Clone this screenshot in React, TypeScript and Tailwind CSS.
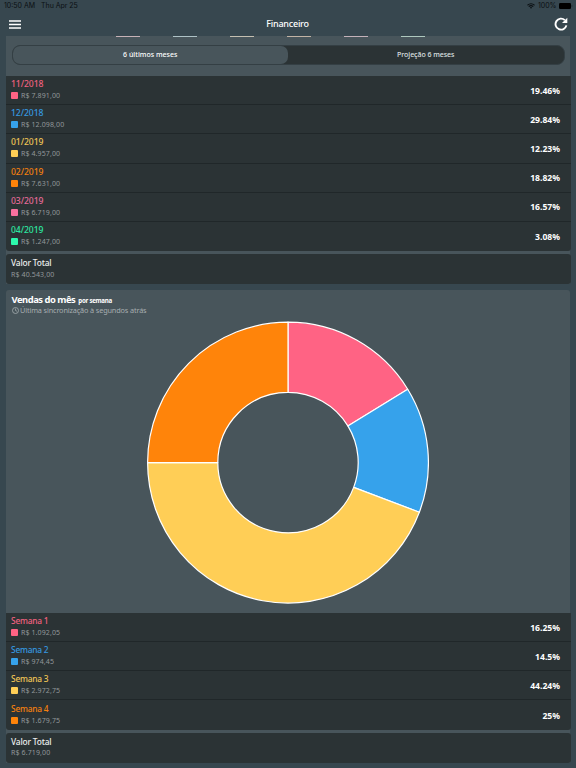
type Item = { label: string; value: string; percent: string; text: string; box: string };

const months: Item[] = [
  { label: '11/2018', value: 'R$ 7.891,00', percent: '19.46%', text: 'text-[#f0617f]', box: 'bg-[#ff6384]' },
  { label: '12/2018', value: 'R$ 12.098,00', percent: '29.84%', text: 'text-[#3699e0]', box: 'bg-[#36a2eb]' },
  { label: '01/2019', value: 'R$ 4.957,00', percent: '12.23%', text: 'text-[#f0c556]', box: 'bg-[#ffce56]' },
  { label: '02/2019', value: 'R$ 7.631,00', percent: '18.82%', text: 'text-[#f5800e]', box: 'bg-[#ff840a]' },
  { label: '03/2019', value: 'R$ 6.719,00', percent: '16.57%', text: 'text-[#e76a98]', box: 'bg-[#f9709f]' },
  { label: '04/2019', value: 'R$ 1.247,00', percent: '3.08%', text: 'text-[#2be8a2]', box: 'bg-[#2dfaad]' },
];

const weeks: Item[] = [
  { label: 'Semana 1', value: 'R$ 1.092,05', percent: '16.25%', text: 'text-[#f0617f]', box: 'bg-[#ff6384]' },
  { label: 'Semana 2', value: 'R$ 974,45', percent: '14.5%', text: 'text-[#3699e0]', box: 'bg-[#36a2eb]' },
  { label: 'Semana 3', value: 'R$ 2.972,75', percent: '44.24%', text: 'text-[#f0c556]', box: 'bg-[#ffce56]' },
  { label: 'Semana 4', value: 'R$ 1.679,75', percent: '25%', text: 'text-[#f5800e]', box: 'bg-[#ff840a]' },
];

function Rows({ items, labelClass }: { items: Item[]; labelClass: string }) {
  return (
    <div className="-mx-[0.5px] overflow-hidden rounded-b-[3px] bg-[#2b3335]">
      {items.map((item, i) => (
        <div
          key={item.label}
          className={`flex h-[29.2px] items-center justify-between pr-[10.5px] pl-[5.5px] ${i < items.length - 1 ? 'border-b border-[#202729]' : ''}`}
        >
          <div className="flex flex-col pb-[1.3px]">
            <span className={`${labelClass} ${item.text} h-[12px] leading-[12px] font-medium whitespace-nowrap`}>{item.label}</span>
            <span className="flex h-[11px] items-center gap-[3px]">
              <i className={`${item.box} size-[7px] rounded-[1px]`} />
              <span className="text-[7px] leading-[11px] tracking-[0.11px] text-[#92979a]">{item.value}</span>
            </span>
          </div>
          <span className="pt-px text-[8.6px] leading-[12px] font-bold text-white">{item.percent}</span>
        </div>
      ))}
    </div>
  );
}

function Total({ value }: { value: string }) {
  return (
    <div className="-mx-[0.5px] mt-[3px] flex h-[30px] flex-col rounded-[3px] bg-[#2b3335] pt-[3px] pl-[5.5px]">
      <span className="h-[11.5px] text-[8.4px] leading-[12px] font-medium tracking-[-0.18px] text-[#eceeee]">Valor Total</span>
      <span className="h-[11px] text-[7px] leading-[11px] tracking-[0.12px] text-[#92979a]">{value}</span>
    </div>
  );
}

const slices = [
  { share: 0.1625, color: '#ff6384' },
  { share: 0.145, color: '#36a2eb' },
  { share: 0.4425, color: '#ffce56' },
  { share: 0.25, color: '#ff840a' },
];

function Donut() {
  let turn = 0;
  const point = (r: number, t: number) =>
    `${(141 + r * Math.sin(t * 2 * Math.PI)).toFixed(2)} ${(141.6 - r * Math.cos(t * 2 * Math.PI)).toFixed(2)}`;
  return (
    <svg width="282" height="283" viewBox="0 0 282 283" className="block shrink-0">
      {slices.map(({ share, color }) => {
        const start = turn;
        turn += share;
        const large = share > 0.5 ? 1 : 0;
        return (
          <path
            key={color}
            d={`M${point(140.4, start)}A140.4 140.4 0 ${large} 1 ${point(140.4, turn)}L${point(70.2, turn)}A70.2 70.2 0 ${large} 0 ${point(70.2, start)}Z`}
            fill={color}
            stroke="#fff"
            strokeWidth="1.2"
            strokeLinejoin="round"
          />
        );
      })}
    </svg>
  );
}

const ticks = ['bg-[#c7b2b7]', 'bg-[#aec2c6]', 'bg-[#c4bfb1]', 'bg-[#c2b3a5]', 'bg-[#c4b2ba]', 'bg-[#aec8be]'];

export default function App() {
  return (
    <div className="flex h-[768px] w-[576px] flex-col overflow-hidden bg-[#37474f] font-['Noto_Sans',sans-serif]">
      <div className="flex h-[12px] shrink-0 items-center justify-between pr-[3px] pl-[4px] text-[#0b1013]">
        <div className="flex gap-[6px] font-['Inter',sans-serif] text-[7px] leading-[12px]">
          <span>10:50 AM</span>
          <span className="tracking-[-0.05px]">Thu Apr 25</span>
        </div>
        <div className="flex items-center gap-[2.5px]">
          <svg width="8" height="6" viewBox="0 0 16 12">
            <path d="M1 4.5Q8-1.5 15 4.5M3.5 7.2Q8 3.3 12.5 7.2" fill="none" stroke="currentColor" strokeWidth="2.1" />
            <path d="M5.7 9Q8 7.2 10.3 9L8 11.7Z" fill="currentColor" />
          </svg>
          <span className="font-['Inter',sans-serif] text-[7px] leading-[12px]">100%</span>
          <svg width="14" height="6" viewBox="0 0 14 6">
            <rect width="12" height="6" rx="1.3" fill="#000" />
            <path d="M12.8 2v2q1-1 0-2" fill="#000" />
          </svg>
        </div>
      </div>

      <header className="flex h-[24px] shrink-0 items-center justify-between pr-[8px] pl-[9px]">
        <svg width="12" height="9" viewBox="0 0 12 9" className="block">
          <path d="M0 1h12M0 4.5h12M0 8h12" stroke="#fff" strokeWidth="1.4" />
        </svg>
        <h1 className="text-[9px] leading-[12px] font-medium tracking-[-0.22px] text-white">Financeiro</h1>
        <svg width="14" height="14" viewBox="0 0 14 14" className="block">
          <path d="M12.4 8.4A5.5 5.5 0 1 1 10.8 3.1" fill="none" stroke="#fff" strokeWidth="1.9" />
          <path d="M13.3.8v5.3H8Z" fill="#fff" />
        </svg>
      </header>

      <section className="mx-[6px] flex h-[40px] shrink-0 flex-col bg-[#48555b]">
        <div className="flex h-px gap-[33px] pl-[110px]">
          {ticks.map((color) => (
            <i key={color} className={`${color} h-px w-[24px]`} />
          ))}
        </div>
        <div className="mx-[5.5px] mt-[8px] flex h-[20px] rounded-[8px] border border-[#343f44] bg-[#2b3335] text-[7px] leading-[18px]">
          <div className="w-1/2 rounded-[7px] bg-[#48555b] text-center font-medium text-white">6 últimos meses</div>
          <div className="w-1/2 text-center font-medium tracking-[-0.05px] text-[#dfe2e3]">Projeção 6 meses</div>
        </div>
      </section>

      <section className="mx-[6px] shrink-0 bg-[#48555b]">
        <Rows items={months} labelClass="text-[8.6px] tracking-[-0.05px]" />
        <Total value="R$ 40.543,00" />
      </section>

      <section className="mx-[6px] mt-[6px] shrink-0 rounded-t-[3px] bg-[#48555b]">
        <div className="flex h-[322.8px] flex-col">
          <div className="flex h-[15px] items-baseline gap-[3px] pt-[2.5px] pl-[5.5px] text-white">
            <h2 className="text-[9.4px] leading-[13px] font-bold tracking-[-0.47px]">Vendas do mês</h2>
            <span className="text-[6.2px] leading-[10px] font-bold tracking-[-0.28px]">por semana</span>
          </div>
          <div className="flex h-[10px] items-center gap-[1.5px] pl-[5.5px] text-[#a7adb0]">
            <svg width="7" height="7" viewBox="0 0 14 14">
              <circle cx="7" cy="7" r="6" fill="none" stroke="currentColor" strokeWidth="1.6" />
              <path d="M7 3v4l3 1.5" fill="none" stroke="currentColor" strokeWidth="1.5" />
            </svg>
            <span className="text-[7.3px] leading-[10px] tracking-[-0.14px]">Última sincronização à segundos atrás</span>
          </div>
          <div className="flex justify-center pt-[6px]">
            <Donut />
          </div>
        </div>
        <Rows items={weeks} labelClass="text-[8.4px] tracking-[-0.22px]" />
        <Total value="R$ 6.719,00" />
      </section>
    </div>
  );
}
